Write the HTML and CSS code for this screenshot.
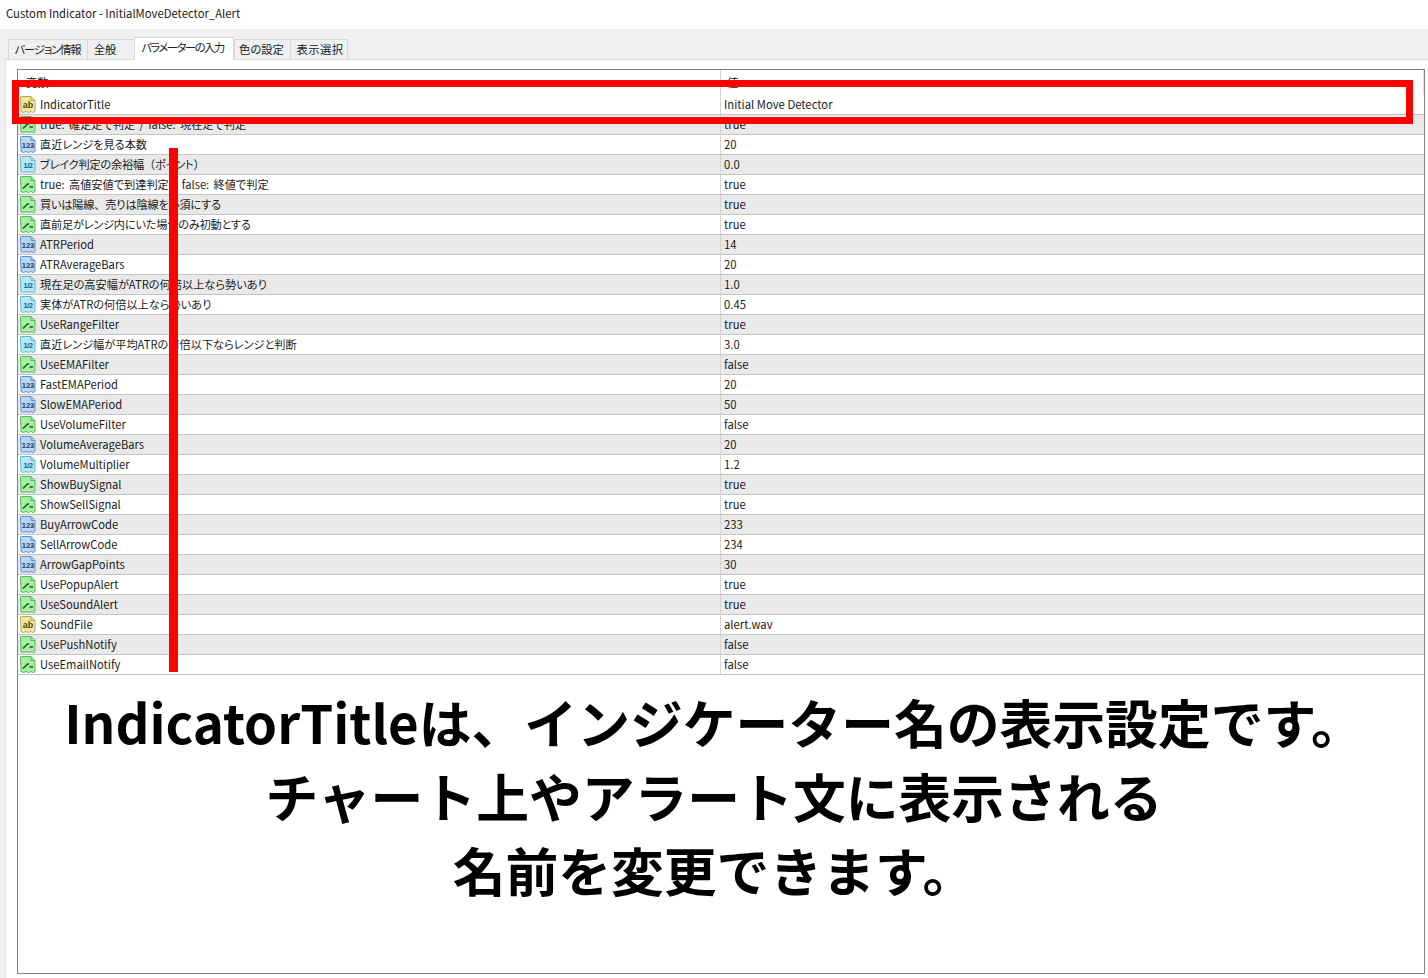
FILE: index.html
```html
<!DOCTYPE html>
<html lang="ja">
<head>
<meta charset="utf-8">
<title>Custom Indicator</title>
<link rel="stylesheet" href="styles.css">
</head>
<body>
<svg class="defs" width="0" height="0" aria-hidden="true">
  <symbol id="doc" viewBox="0 0 16 17">
    <path class="doc-fill" d="M.5 1.500q0-1 1-1h9.500l4 4v11l-2 1-2-1-2.500 1-2.500-1-2.500 1-2.500-1z"/>
    <path class="doc-fold" d="M11 .5v4h4"/>
  </symbol>
</svg>
<header class="titlebar">Custom Indicator - InitialMoveDetector_Alert</header>
<nav class="tabs">
  <span class="tab tab-a">バージョン情報</span>
  <span class="tab tab-b">全般</span>
  <span class="tab tab-c active">パラメーターの入力</span>
  <span class="tab tab-d">色の設定</span>
  <span class="tab tab-e">表示選択</span>
</nav>
<main class="panel">
  <section class="list">
    <div class="row head"><div class="name">変数</div><div class="val">値</div></div>
    <div class="row"><div class="name"><svg class="ic ab"><use href="#doc"/><text x="8" y="12">ab</text></svg>IndicatorTitle</div><div class="val">Initial Move Detector</div></div>
    <div class="row"><div class="name spaced"><svg class="ic bool"><use href="#doc"/><path class="tick" d="M3 12.500L7.500 8h1.500M9.500 11H13"/></svg>true: 確定足で判定 / false: 現在足で判定</div><div class="val">true</div></div>
    <div class="row"><div class="name"><svg class="ic int"><use href="#doc"/><text x="8" y="12">123</text></svg>直近レンジを見る本数</div><div class="val">20</div></div>
    <div class="row"><div class="name tight"><svg class="ic dbl"><use href="#doc"/><text x="8" y="12">1/2</text></svg>ブレイク判定の余裕幅<span class="fw">（</span>ポイント<span class="fw">）</span></div><div class="val">0.0</div></div>
    <div class="row"><div class="name spaced"><svg class="ic bool"><use href="#doc"/><path class="tick" d="M3 12.500L7.500 8h1.500M9.500 11H13"/></svg>true: 高値安値で到達判定 / false: 終値で判定</div><div class="val">true</div></div>
    <div class="row"><div class="name tight"><svg class="ic bool"><use href="#doc"/><path class="tick" d="M3 12.500L7.500 8h1.500M9.500 11H13"/></svg>買いは陽線<span class="fw">、</span>売りは陰線を必須にする</div><div class="val">true</div></div>
    <div class="row"><div class="name tight"><svg class="ic bool"><use href="#doc"/><path class="tick" d="M3 12.500L7.500 8h1.500M9.500 11H13"/></svg>直前足がレンジ内にいた場合のみ初動とする</div><div class="val">true</div></div>
    <div class="row"><div class="name"><svg class="ic int"><use href="#doc"/><text x="8" y="12">123</text></svg>ATRPeriod</div><div class="val">14</div></div>
    <div class="row"><div class="name"><svg class="ic int"><use href="#doc"/><text x="8" y="12">123</text></svg>ATRAverageBars</div><div class="val">20</div></div>
    <div class="row"><div class="name"><svg class="ic dbl"><use href="#doc"/><text x="8" y="12">1/2</text></svg>現在足の高安幅がATRの何倍以上なら勢いあり</div><div class="val">1.0</div></div>
    <div class="row"><div class="name"><svg class="ic dbl"><use href="#doc"/><text x="8" y="12">1/2</text></svg>実体がATRの何倍以上なら勢いあり</div><div class="val">0.45</div></div>
    <div class="row"><div class="name"><svg class="ic bool"><use href="#doc"/><path class="tick" d="M3 12.500L7.500 8h1.500M9.500 11H13"/></svg>UseRangeFilter</div><div class="val">true</div></div>
    <div class="row"><div class="name"><svg class="ic dbl"><use href="#doc"/><text x="8" y="12">1/2</text></svg>直近レンジ幅が平均ATRの何倍以下ならレンジと判断</div><div class="val">3.0</div></div>
    <div class="row"><div class="name"><svg class="ic bool"><use href="#doc"/><path class="tick" d="M3 12.500L7.500 8h1.500M9.500 11H13"/></svg>UseEMAFilter</div><div class="val">false</div></div>
    <div class="row"><div class="name"><svg class="ic int"><use href="#doc"/><text x="8" y="12">123</text></svg>FastEMAPeriod</div><div class="val">20</div></div>
    <div class="row"><div class="name"><svg class="ic int"><use href="#doc"/><text x="8" y="12">123</text></svg>SlowEMAPeriod</div><div class="val">50</div></div>
    <div class="row"><div class="name"><svg class="ic bool"><use href="#doc"/><path class="tick" d="M3 12.500L7.500 8h1.500M9.500 11H13"/></svg>UseVolumeFilter</div><div class="val">false</div></div>
    <div class="row"><div class="name"><svg class="ic int"><use href="#doc"/><text x="8" y="12">123</text></svg>VolumeAverageBars</div><div class="val">20</div></div>
    <div class="row"><div class="name"><svg class="ic dbl"><use href="#doc"/><text x="8" y="12">1/2</text></svg>VolumeMultiplier</div><div class="val">1.2</div></div>
    <div class="row"><div class="name"><svg class="ic bool"><use href="#doc"/><path class="tick" d="M3 12.500L7.500 8h1.500M9.500 11H13"/></svg>ShowBuySignal</div><div class="val">true</div></div>
    <div class="row"><div class="name"><svg class="ic bool"><use href="#doc"/><path class="tick" d="M3 12.500L7.500 8h1.500M9.500 11H13"/></svg>ShowSellSignal</div><div class="val">true</div></div>
    <div class="row"><div class="name"><svg class="ic int"><use href="#doc"/><text x="8" y="12">123</text></svg>BuyArrowCode</div><div class="val">233</div></div>
    <div class="row"><div class="name"><svg class="ic int"><use href="#doc"/><text x="8" y="12">123</text></svg>SellArrowCode</div><div class="val">234</div></div>
    <div class="row"><div class="name"><svg class="ic int"><use href="#doc"/><text x="8" y="12">123</text></svg>ArrowGapPoints</div><div class="val">30</div></div>
    <div class="row"><div class="name"><svg class="ic bool"><use href="#doc"/><path class="tick" d="M3 12.500L7.500 8h1.500M9.500 11H13"/></svg>UsePopupAlert</div><div class="val">true</div></div>
    <div class="row"><div class="name"><svg class="ic bool"><use href="#doc"/><path class="tick" d="M3 12.500L7.500 8h1.500M9.500 11H13"/></svg>UseSoundAlert</div><div class="val">true</div></div>
    <div class="row"><div class="name"><svg class="ic ab"><use href="#doc"/><text x="8" y="12">ab</text></svg>SoundFile</div><div class="val">alert.wav</div></div>
    <div class="row"><div class="name"><svg class="ic bool"><use href="#doc"/><path class="tick" d="M3 12.500L7.500 8h1.500M9.500 11H13"/></svg>UsePushNotify</div><div class="val">false</div></div>
    <div class="row"><div class="name"><svg class="ic bool"><use href="#doc"/><path class="tick" d="M3 12.500L7.500 8h1.500M9.500 11H13"/></svg>UseEmailNotify</div><div class="val">false</div></div>
    <div class="caption">
      <p>IndicatorTitleは、インジケーター名の表示設定です。</p>
      <p>チャート上やアラート文に表示される</p>
      <p>名前を変更できます。</p>
    </div>
  </section>
</main>
<div class="mark-box"></div>
<div class="mark-bar"></div>
</body>
</html>
```
FILE: styles.css
```css
* { box-sizing: border-box; }
html, body { margin: 0; height: 100%; }
body {
  width: 1428px;
  height: 978px;
  overflow: hidden;
  display: flex;
  flex-direction: column;
  position: relative;
  background: #f0f0f0;
  color: #1a1a1a;
  font: 11.300px/20px "Noto Sans CJK JP", "Noto Sans", sans-serif;
  font-feature-settings: "palt";
}
.defs { position: absolute; }

.titlebar {
  height: 29px;
  flex: none;
  padding: 3px 0 0 6px;
  background: #fff;
  line-height: 20px;
}

.tabs {
  height: 30px;
  flex: none;
  display: flex;
  align-items: flex-end;
  padding-left: 8px;
  background: #f0f0f0;
}
.tab {
  height: 20px;
  border: 1px solid #d9d9d9;
  border-bottom: 0;
  border-right: 0;
  background: #f0f0f0;
  text-align: center;
  line-height: 19px;
  white-space: nowrap;
}
.tab-a { width: 79px; padding-right: 1px; letter-spacing: -1.100px; }
.tab-b { width: 47px; padding-right: 12px; }
.tab-c { width: 100px; padding-right: 3px; letter-spacing: -1.450px; }
.tab-d { width: 56px; padding-right: 2px; }
.tab-e { width: 58px; padding-left: 2px; letter-spacing: 0.500px; border-right: 1px solid #d9d9d9; }
.tab.active {
  height: 23px;
  margin-bottom: -1px;
  position: relative;
  z-index: 1;
  background: #fff;
  border-right: 1px solid #d9d9d9;
  line-height: 18px;
}

.panel {
  flex: 1;
  margin-left: 5px;
  padding: 9px 3px 4px 11px;
  background: #fff;
  border-top: 1px solid #d9d9d9;
  border-left: 1px solid #e3e3e3;
  display: flex;
}
.list {
  flex: 1;
  border: 1px solid #838383;
  background: #fff;
  display: flex;
  flex-direction: column;
}

.row {
  flex: none;
  height: 20px;
  display: grid;
  grid-template-columns: 702px 1fr;
  border-bottom: 1px solid #c4c4c4;
  line-height: 18px;
  white-space: nowrap;
}
.row:nth-child(odd) { background: #e9e9e9; }
.row.head {
  height: 25px;
  background: #fff;
  border-bottom: 0;
  border-right: 1px solid #e0e0e0;
  line-height: 25px;
}
.row.head .name { padding-left: 8px; }
.row.head .val { padding-left: 6px; }
.name {
  display: flex;
  align-items: center;
  padding-left: 2px;
  padding-bottom: 1px;
  overflow: hidden;
  font-size: 11.200px;
  white-space: pre;
}
.spaced { word-spacing: 1.800px; }
.tight { letter-spacing: -0.200px; }
.fw { font-feature-settings: normal; }
.val {
  padding-left: 3px;
  border-left: 1px solid #d4d4d4;
}

.ic {
  width: 16px;
  height: 17px;
  flex: none;
  margin-right: 4px;
  overflow: visible;
}
.ic text {
  font: 700 7.500px "Liberation Sans", sans-serif;
  text-anchor: middle;
  letter-spacing: 0;
  word-spacing: 0;
}
.doc-fill { stroke-width: 1; }
.doc-fold { fill: none; stroke-width: 1; }
.ab { fill: #efe79f; stroke: #b5a75a; }
.ab text { fill: #4f4818; stroke: none; font-size: 9px; }
.int { fill: #b9d5f2; stroke: #5f93cc; }
.int text { fill: #123f78; stroke: none; }
.dbl { fill: #b5e8f2; stroke: #5dbad0; }
.dbl text { fill: #14607a; stroke: none; letter-spacing: -0.500px; }
.bool { fill: #a9eca3; stroke: #4dbb5c; }
.tick { fill: none; stroke: #0b5f22; stroke-width: 1.500; }

.caption {
  padding: 10px 14px 0 0;
  text-align: center;
  color: #000;
  font-size: 52.800px;
  font-weight: 700;
  font-feature-settings: normal;
  line-height: 73.800px;
}
.caption p { margin: 0; }

.mark-box {
  position: absolute;
  left: 12px;
  top: 80px;
  width: 1401px;
  height: 44px;
  border: 7px solid #f00;
}
.mark-bar {
  position: absolute;
  left: 169px;
  top: 148px;
  width: 9px;
  height: 524px;
  background: #f00;
}
```
